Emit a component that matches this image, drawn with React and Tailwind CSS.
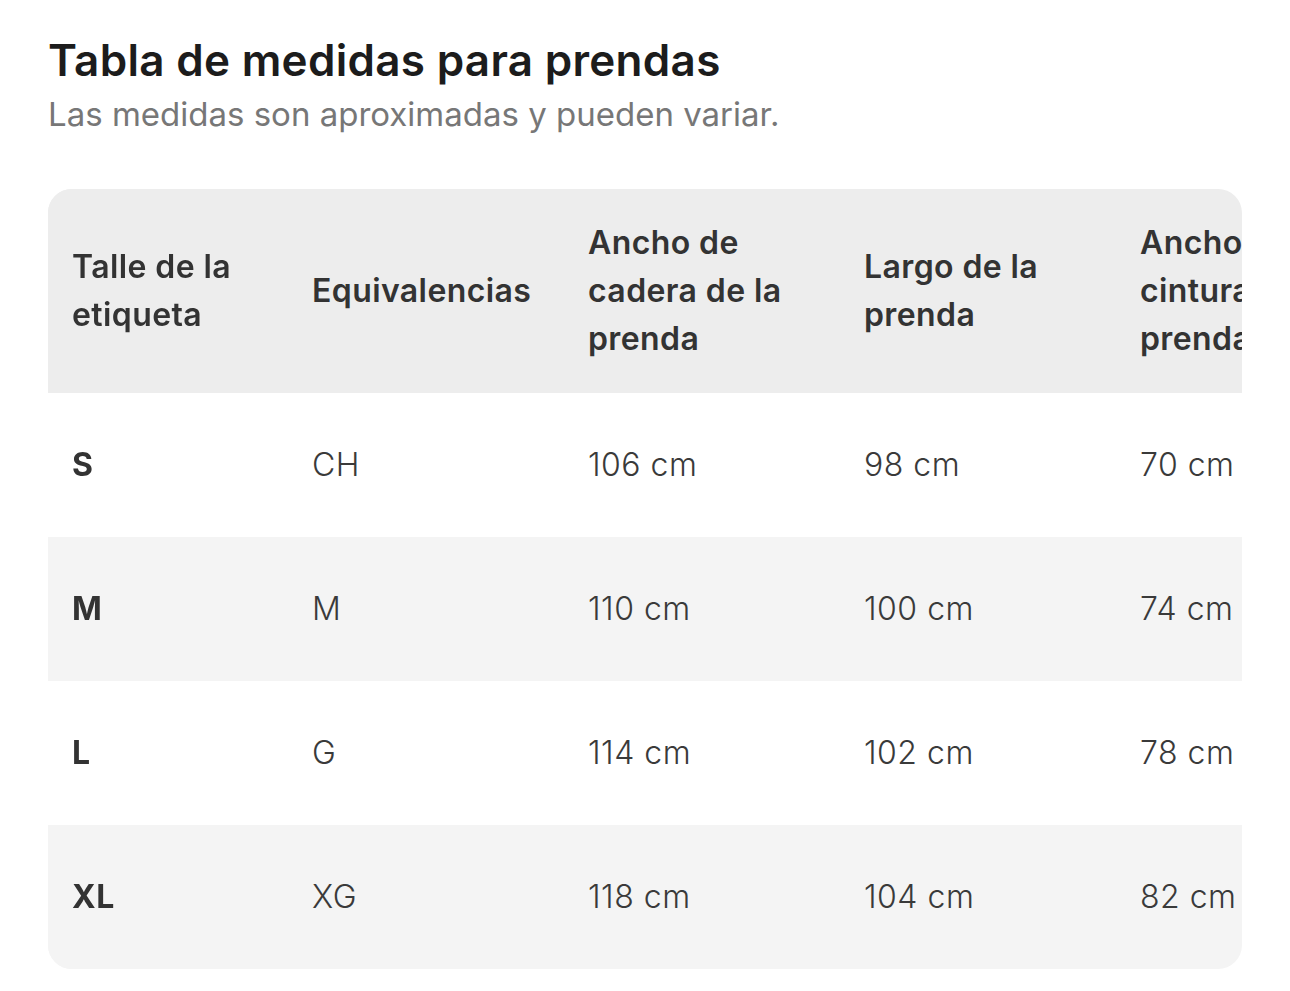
import React from "react";

const headers = [
  "Talle de la etiqueta",
  "Equivalencias",
  "Ancho de cadera de la prenda",
  "Largo de la prenda",
  "Ancho de cintura de la prenda",
];

const rows = [
  ["S", "CH", "106 cm", "98 cm", "70 cm"],
  ["M", "M", "110 cm", "100 cm", "74 cm"],
  ["L", "G", "114 cm", "102 cm", "78 cm"],
  ["XL", "XG", "118 cm", "104 cm", "82 cm"],
];

export default function App() {
  return (
    <div
      className="min-h-screen bg-white px-12 pt-[34px]"
      style={{ fontFamily: '"Inter", "Open Sans", sans-serif' }}
    >
      <h1 className="text-[44px] leading-[52px] font-semibold text-[#1c1c1c] tracking-[0.3px]">
        Tabla de medidas para prendas
      </h1>
      <p className="text-[33px] leading-[40px] text-[#777777] mt-[8px]">
        Las medidas son aproximadas y pueden variar.
      </p>

      <div className="mt-[55px] w-[1194px] rounded-[24px] overflow-x-auto [scrollbar-width:none]">
        <table className="table-fixed border-collapse w-[1344px]">
          <colgroup>
            <col className="w-[240px]" />
            <col className="w-[276px]" />
            <col className="w-[276px]" />
            <col className="w-[276px]" />
            <col className="w-[276px]" />
          </colgroup>
          <thead>
            <tr className="h-[204px] bg-[#ededed]">
              {headers.map((h, i) => (
                <th
                  key={h}
                  className={
                    "px-6 text-left align-middle text-[32px] leading-[48px] font-semibold text-[#333333] tracking-[0.4px] " +
                    (i === 0
                      ? "sticky left-0 z-10 bg-[#ededed] shadow-[2px_0_7px_rgba(40,50,90,0.15)]"
                      : "")
                  }
                >
                  {h}
                </th>
              ))}
            </tr>
          </thead>
          <tbody>
            {rows.map((r, ri) => {
              const bg = ri % 2 === 0 ? "bg-white" : "bg-[#f4f4f4]";
              return (
                <tr key={r[0]} className={"h-[144px] " + bg}>
                  {r.map((c, ci) => (
                    <td
                      key={ci}
                      className={
                        "px-6 align-middle text-[32px] leading-[40px] text-[#3a3a3a] tracking-[0.5px] " +
                        (ci === 0
                          ? "sticky left-0 z-10 font-bold text-[#333333] shadow-[2px_0_7px_rgba(40,50,90,0.15)] " +
                            bg
                          : "font-light")
                      }
                    >
                      {c}
                    </td>
                  ))}
                </tr>
              );
            })}
          </tbody>
        </table>
      </div>
    </div>
  );
}
